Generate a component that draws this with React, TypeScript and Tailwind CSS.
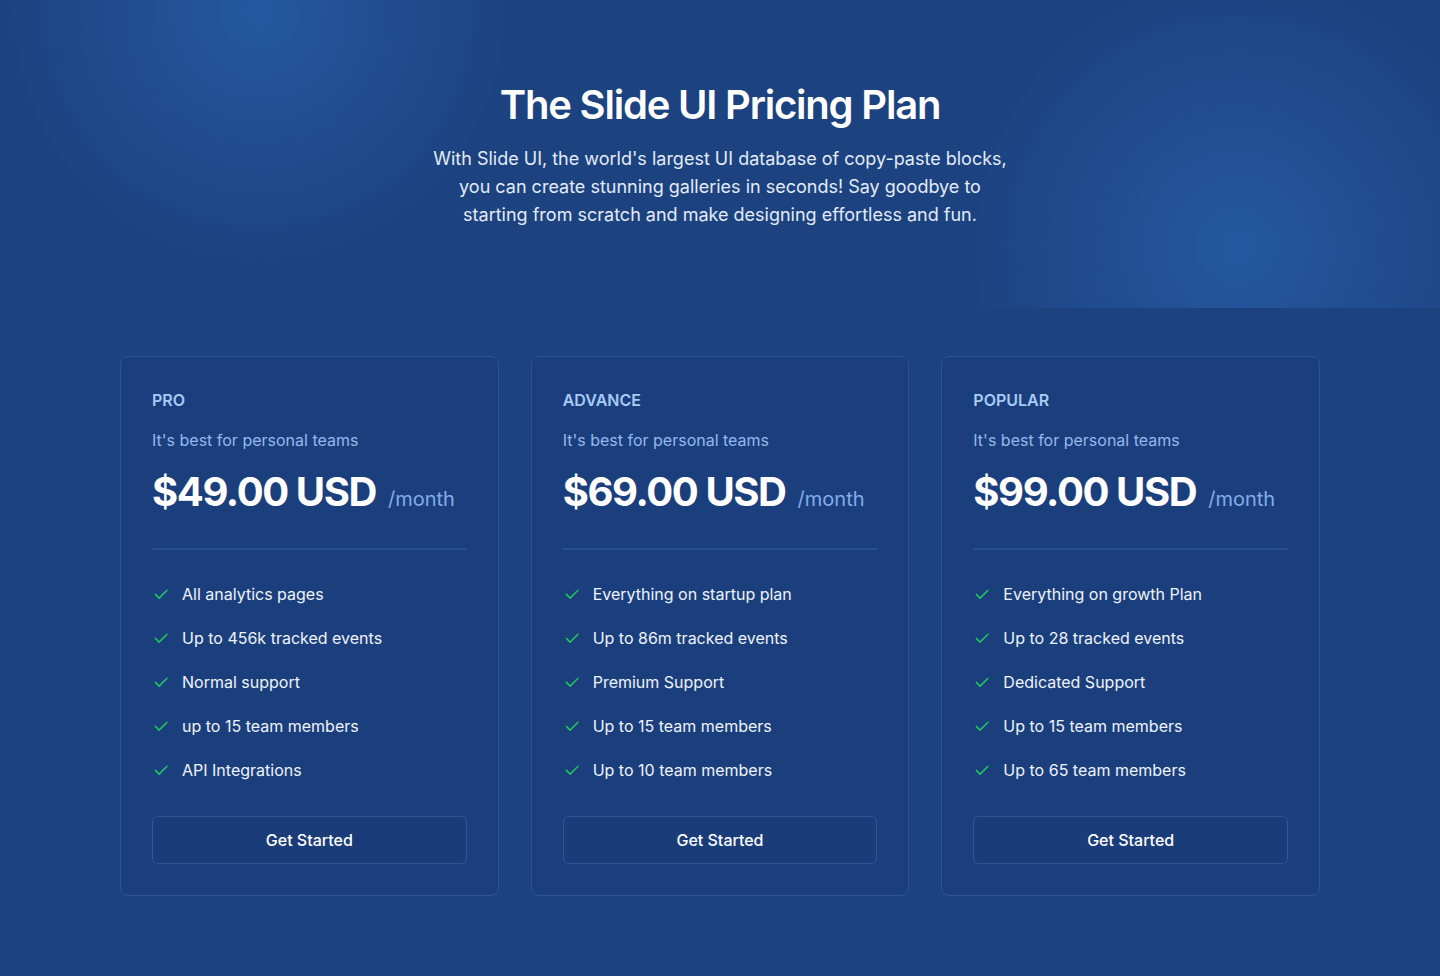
const plans = [
  {
    name: "PRO",
    price: "$49.00 USD",
    features: [
      "All analytics pages",
      "Up to 456k tracked events",
      "Normal support",
      "up to 15 team members",
      "API Integrations",
    ],
  },
  {
    name: "ADVANCE",
    price: "$69.00 USD",
    features: [
      "Everything on startup plan",
      "Up to 86m tracked events",
      "Premium Support",
      "Up to 15 team members",
      "Up to 10 team members",
    ],
  },
  {
    name: "POPULAR",
    price: "$99.00 USD",
    features: [
      "Everything on growth Plan",
      "Up to 28 tracked events",
      "Dedicated Support",
      "Up to 15 team members",
      "Up to 65 team members",
    ],
  },
];

const CheckIcon = () => (
  <svg width="18" height="18" viewBox="0 0 24 24" fill="none" className="shrink-0">
    <path
      d="M4.5 12.5l5 5L20 7"
      stroke="#22c55e"
      strokeWidth="2"
      strokeLinecap="round"
      strokeLinejoin="round"
    />
  </svg>
);

const App = () => {
  return (
    <div className="min-h-[976px] bg-[#1c4280] font-['Inter',sans-serif] text-white">
      <div className="h-[308px] pt-[81px] text-center bg-[radial-gradient(circle_at_18%_4%,#2558a1_0%,rgba(37,88,161,0)_260px),radial-gradient(circle_at_86%_80%,#2558a1_0%,rgba(37,88,161,0)_280px)]">
        <h1 className="text-[40px] leading-[48px] font-semibold tracking-[-0.03em]">
          The Slide UI Pricing Plan
        </h1>
        <p className="mt-4 mx-auto max-w-[590px] text-lg leading-7 text-[#e3ebf7]">
          With Slide UI, the world's largest UI database of copy-paste blocks,
          you can create stunning galleries in seconds! Say goodbye to starting
          from scratch and make designing effortless and fun.
        </p>
      </div>

      <div className="mt-12 mx-auto max-w-[1200px] grid grid-cols-3 gap-8">
        {plans.map((plan) => (
          <div
            key={plan.name}
            className="rounded-lg border border-[#2b5497] bg-[#1b3f7c] px-[31px] pt-[31px] pb-[31px]"
          >
            <div className="text-base leading-6 font-semibold text-[#a8cbf7]">
              {plan.name}
            </div>
            <div className="mt-4 text-base leading-6 text-[#94b9ec]">
              It's best for personal teams
            </div>
            <div className="mt-4 flex items-baseline gap-3">
              <span className="text-[40px] leading-[48px] font-bold tracking-[-0.035em]">
                {plan.price}
              </span>
              <span className="text-xl text-[#83ace8]">/month</span>
            </div>
            <div className="mt-8 h-[2px] bg-[#26508f]" />
            <ul className="mt-8 space-y-5">
              {plan.features.map((f) => (
                <li key={f} className="flex items-center gap-3 text-base leading-6 text-[#eef3fb]">
                  <CheckIcon />
                  {f}
                </li>
              ))}
            </ul>
            <button className="mt-[34px] h-12 w-full rounded-md border border-[#2d5799] bg-[#1a3c79] text-base font-medium text-white">
              Get Started
            </button>
          </div>
        ))}
      </div>
    </div>
  );
};

export default App;
